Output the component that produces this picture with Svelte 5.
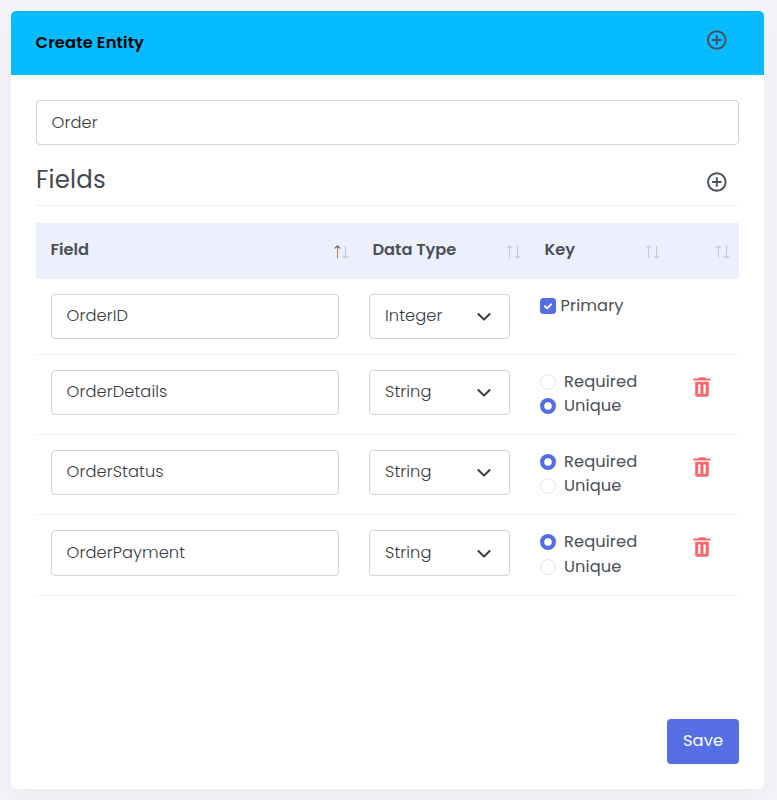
<script>
  let entityName = $state('Order');
  let fields = $state([
    { name: 'OrderID', type: 'Integer', primary: true, h: 76, box: 45 },
    { name: 'OrderDetails', type: 'String', key: 'Unique', h: 80, box: 45 },
    { name: 'OrderStatus', type: 'String', key: 'Required', h: 80, box: 45 },
    { name: 'OrderPayment', type: 'String', key: 'Required', h: 81, box: 46 }
  ]);
  const columns = [
    { title: 'Field', sorted: true },
    { title: 'Data Type' },
    { title: 'Key' },
    { title: '' }
  ];
</script>

{#snippet plus()}
  <svg class="plus" width="20" height="20" viewBox="0 0 20 20" fill="none" stroke="#495057" stroke-width="1.9">
    <circle cx="9.8" cy="10" r="8.8" />
    <path d="M9.8 5.2v9.6M5 10h9.6" />
  </svg>
{/snippet}

<main class="card">
  <header>
    <h4>Create Entity</h4>
    {@render plus()}
  </header>
  <section class="body">
    <input class="box entity" bind:value={entityName} />
    <div class="title">
      <h2>Fields</h2>
      {@render plus()}
    </div>
    <div class="thead">
      {#each columns as col}
        <div class="th">
          <span>{col.title}</span>
          <svg width="15" height="14" viewBox="0 0 15 14" fill="none" stroke-width="1.1">
            <path d="M3.5 13.5V1" stroke={col.sorted ? '#c08a58' : '#c8ccd8'} />
            <path d="M.8 3.4L3.5.9l2.7 2.5" stroke={col.sorted ? '#495057' : '#c3c7d3'} />
            <path d="M11.5.5V13M8.8 10.6l2.7 2.5 2.7-2.5" stroke="#c3c7d3" />
          </svg>
        </div>
      {/each}
    </div>
    {#each fields as f, i}
      <div class="row" class:last={i === fields.length - 1} style="height:{f.h}px">
        <div class="cell"><input class="box" style="height:{f.box}px" bind:value={f.name} /></div>
        <div class="cell">
          <button class="box select" style="height:{f.box}px">
            <span>{f.type}</span>
            <svg width="16" height="16" viewBox="0 0 16 16" fill="none" stroke="#343a40" stroke-width="2" stroke-linecap="round" stroke-linejoin="round"><path d="M2.4 5l5.6 5.6L13.6 5" /></svg>
          </button>
        </div>
        <div class="cell key">
          {#if f.primary}
            <label class="primary">
              <svg width="16" height="16" viewBox="0 0 16 16"><rect width="16" height="16" rx="3.5" fill="#556ee6" /><path d="M4.9 8.2l2.3 2.1 3.9-4" fill="none" stroke="#fff" stroke-width="1.9" stroke-linecap="round" stroke-linejoin="round" /></svg>
              <span>Primary</span>
            </label>
          {:else}
            {#each ['Required', 'Unique'] as option}
              <label>
                <svg width="16" height="16" viewBox="0 0 16 16">
                  {#if f.key === option}
                    <circle cx="8" cy="8" r="8" fill="#556ee6" />
                    <circle cx="8" cy="8" r="3.8" fill="#fff" />
                  {:else}
                    <circle cx="8" cy="8" r="7.5" fill="#fff" stroke="#e2e3e6" />
                  {/if}
                </svg>
                <span>{option}</span>
              </label>
            {/each}
          {/if}
        </div>
        <div class="cell act">
          {#if !f.primary}
            <svg width="18" height="20" viewBox="0 0 18 20" fill="#f46a6a">
              <path fill-rule="evenodd" d="M5.2 1.6Q5.6.2 7 .2h4q1.4 0 1.8 1.4H17q.8 0 .8 1T17 3.6H1q-.8 0-.8-1t.8-1zM2.2 4.8h13.6v13q0 1.9-1.9 1.9H4.1q-1.9 0-1.9-1.9zM5.2 7.6v9.4h2.2V7.6zm5.3 0v9.4h2.2V7.6z" />
            </svg>
          {/if}
        </div>
      </div>
    {/each}
    <footer><button class="save">Save</button></footer>
  </section>
</main>

<style>
  :global(body) { background: #f3f3f8; }
  :global(#app) { height: 800px; display: flow-root; }
  * { box-sizing: border-box; }
  .card {
    width: 753px; height: 778px; margin: 11px 0 0 11px;
    background: #fff; border-radius: 5px; overflow: hidden;
    box-shadow: 0 12px 24px rgba(18, 38, 63, 0.03);
    font: 400 16.25px/24px Poppins, Inter, sans-serif;
    letter-spacing: 0.1px;
    color: #495057;
    display: flex; flex-direction: column;
  }
  header {
    height: 64px; background: #06bbff; padding: 0 37px 0 24.5px;
    display: flex; justify-content: space-between; align-items: center;
  }
  h4 { margin: 0; font-size: 16.25px; font-weight: 600; letter-spacing: 0.15px; color: #000; }
  header .plus { margin-bottom: 6px; }
  .plus { display: block; }
  .body { flex: 1; padding: 25px; display: flex; flex-direction: column; }
  .box {
    display: block; width: 100%; height: 45px; padding: 0 15px 1px 14.5px;
    border: 1px solid #ced4da; border-radius: 4px; background: #fff;
    font: inherit; font-weight: 300; letter-spacing: 0.1px; color: #343b42; outline: none;
  }
  .row .box { padding-bottom: 2px; }
  .title {
    height: 61px; border-bottom: 1px solid #eff0f2; margin-bottom: 17px; padding: 0 12px 0 0;
    display: flex; justify-content: space-between; align-items: center;
  }
  .title .plus { margin-top: 13px; }
  h2 { margin: 10px 0 0; font-size: 24.4px; line-height: 30px; font-weight: 400; letter-spacing: 0.2px; color: #424950; }
  .thead { height: 56px; background: #ecf0fd; display: grid; grid-template-columns: 322px 172px 139px 70px; }
  .th { display: flex; justify-content: space-between; padding: 15px 9.5px 0 14.5px; font-weight: 600; letter-spacing: -0.03px; }
  .th svg { margin-top: 7px; }
  .row { display: grid; grid-template-columns: 318px 171px 152px 62px; border-bottom: 1px solid #eff2f7; }
  .cell { padding: 15px; }
  .key { padding-right: 0; }
  .row .select { display: flex; justify-content: space-between; align-items: center; padding: 0 17px 2px 15px; text-align: left; }
  .select svg { margin-top: 3px; }
  .last input.box { padding-bottom: 2px; }
  .row.last .select { padding-bottom: 0; }
  .last .select svg { margin-top: 1px; }
  label { display: flex; align-items: center; gap: 8px; height: 24px; }
  .last label + label { margin-top: 1px; }
  .primary { gap: 4.5px; }
  .act { padding: 22px 0 0 16px; }
  footer { margin-top: auto; display: flex; justify-content: flex-end; }
  .save {
    width: 72px; height: 45px; border: 0; border-radius: 4px; background: #556ee6; color: #fff;
    font: inherit; letter-spacing: 0.1px; padding: 0 0 2px;
  }
</style>
